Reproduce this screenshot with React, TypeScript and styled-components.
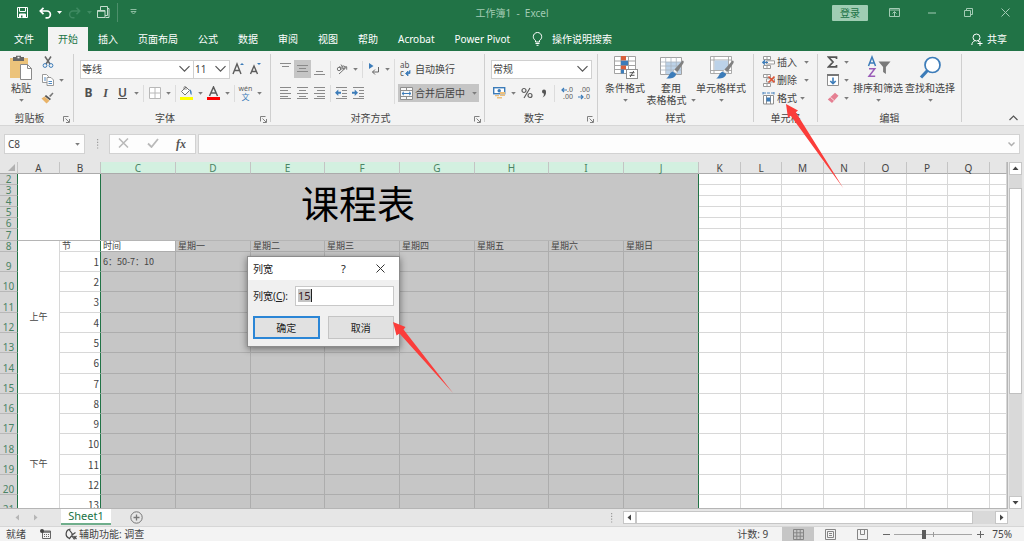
import React from "react";
import styled, { createGlobalStyle, css } from "styled-components";

const GREEN = "#217346";
const INK = "#444444";
const BLUE = "#3c7cb9";
const PANEL = "#f3f3f3";
const SHELL = "#e6e6e6";
const SELECTED = "#c6c6c6";

const GlobalStyle = createGlobalStyle`
  *, *::before, *::after { box-sizing: border-box; }
  body {
    margin: 0;
    color: ${INK};
    font: 10px/12px "Noto Sans", "Noto Sans CJK SC", sans-serif;
  }
  button, input, select {
    margin: 0;
    padding: 0;
    border: 0;
    border-radius: 0;
    background: none;
    color: inherit;
    font: inherit;
    outline: none;
  }
`;

const Window = styled.div`
  display: flex;
  flex-direction: column;
  height: 100vh;
  overflow: hidden;
  background: ${SHELL};
`;

/* ---------- Title bar and tabs ---------- */

const TitleBar = styled.header`
  display: grid;
  grid-template-columns: 1fr auto 1fr;
  align-items: center;
  height: 27px;
  padding-bottom: 2px;
  background: ${GREEN};
  color: #a3cbb4;
`;

const QuickAccess = styled.div`
  display: flex;
  align-items: center;
  padding-left: 13px;
`;

const QuickButton = styled.button<{ $w?: number; $gap?: number }>`
  display: flex;
  align-items: center;
  justify-content: center;
  width: ${(p) => p.$w ?? 18}px;
  height: 18px;
  margin-left: ${(p) => p.$gap ?? 0}px;
  color: #ffffff;
`;

const QuickRule = styled.span`
  width: 1px;
  height: 19px;
  margin: 0 6px 0 5px;
  background: #4d8f6b;
`;

const DocTitle = styled.h1`
  margin: 0;
  font-size: 10px;
  font-weight: 400;
  white-space: pre;
`;

const WindowControls = styled.div`
  display: flex;
  justify-content: flex-end;
  align-items: center;
`;

const SignIn = styled.button`
  width: 36px;
  height: 16px;
  margin-right: 8px;
  border-radius: 1px;
  background: #9fcdb3;
  color: ${GREEN};
`;

const WindowButton = styled.button`
  display: flex;
  align-items: center;
  justify-content: center;
  width: 37px;
  height: 24px;
`;

const TabBar = styled.nav`
  display: flex;
  align-items: stretch;
  height: 24px;
  background: ${GREEN};
  color: #ffffff;
`;

const Tab = styled.button<{ $active?: boolean; $file?: boolean }>`
  padding: 0 ${(p) => (p.$file ? 14 : 10)}px;
  white-space: nowrap;
  ${(p) => p.$active && css`
    background: ${PANEL};
    color: ${GREEN};
  `}
`;

const TabAction = styled.button<{ $end?: boolean }>`
  display: flex;
  align-items: center;
  gap: ${(p) => (p.$end ? 4 : 9)}px;
  margin-left: ${(p) => (p.$end ? "auto" : "2px")};
  padding: 0 ${(p) => (p.$end ? 17 : 10)}px 0 10px;
  white-space: nowrap;
`;

/* ---------- Ribbon ---------- */

const Ribbon = styled.section`
  display: flex;
  flex: none;
  height: 75px;
  background: ${PANEL};
  border-bottom: 1px solid #d6d6d6;
`;

const Group = styled.div<{ $w: number }>`
  display: flex;
  flex: none;
  flex-direction: column;
  width: ${(p) => p.$w}px;
`;

const GroupBody = styled.div<{ $indent: number }>`
  display: flex;
  height: 60px;
  padding-left: ${(p) => p.$indent}px;
`;

const GroupFooter = styled.div<{ $launcher?: boolean }>`
  display: grid;
  grid-template-columns: ${(p) => (p.$launcher ? "1fr 14px" : "1fr")};
  align-items: center;
  height: 14px;
  text-align: center;
  white-space: nowrap;
`;

const Launcher = styled.button`
  display: flex;
  padding: 2px 0 0 4px;
`;

const GroupRule = styled.div`
  width: 1px;
  height: 68px;
  margin-top: 3px;
  background: #cfcfcf;
`;

const RibbonEnd = styled.div`
  display: flex;
  flex: 1;
  align-items: flex-end;
  justify-content: flex-end;
  padding: 0 6px 2px 0;
`;

const Rows = styled.div`
  display: flex;
  flex-direction: column;
  gap: 6px;
  padding-top: 9px;
`;

const Stack = styled.div`
  display: flex;
  flex-direction: column;
  padding-top: 2px;
`;

const Row = styled.div`
  display: flex;
  align-items: center;
  height: 18px;
`;

const ToolButton = styled.button<{ $active?: boolean }>`
  display: flex;
  align-items: center;
  justify-content: center;
  width: 17px;
  height: 18px;
  background: ${(p) => (p.$active ? "#c5c5c5" : "transparent")};
`;

const CaretButton = styled.button`
  display: flex;
  align-items: center;
  justify-content: center;
  width: 10px;
  height: 18px;
`;

const RowRule = styled.span<{ $tall?: boolean }>`
  width: 1px;
  height: ${(p) => (p.$tall ? 45 : 17)}px;
  margin: ${(p) => (p.$tall ? "8px 3px 0 2px" : "0 2px")};
  background: #dcdcdc;
`;

const Letter = styled.span<{ $kind?: "bold" | "italic" | "underline" }>`
  color: #505050;
  font-size: 12px;
  font-weight: ${(p) => (p.$kind === "bold" ? 700 : 600)};
  font-family: ${(p) => (p.$kind === "italic" ? '"Liberation Serif", serif' : "inherit")};
  font-style: ${(p) => (p.$kind === "italic" ? "italic" : "normal")};
  text-decoration: ${(p) => (p.$kind === "underline" ? "underline" : "none")};
`;

const SelectFrame = styled.span<{ $w: number }>`
  display: grid;
  align-items: center;
  width: ${(p) => p.$w}px;
  height: 19px;
  border: 1px solid #d0d0d0;
  background: #ffffff;
  & > * { grid-area: 1 / 1; }
  & > svg { justify-self: end; margin-right: 2px; pointer-events: none; }
  & + & { border-left: 0; }
`;

const Select = styled.select`
  width: 100%;
  height: 17px;
  padding-left: 1px;
  appearance: none;
`;

const TextButton = styled.button<{ $active?: boolean; $gap?: number }>`
  position: relative;
  display: flex;
  align-items: center;
  gap: ${(p) => p.$gap ?? 2}px;
  height: 18px;
  padding: 0 2px;
  background: ${(p) => (p.$active ? "#c5c5c5" : "transparent")};
  white-space: nowrap;
`;

const MenuMark = styled.span<{ $gap: number }>`
  display: flex;
  margin-left: ${(p) => p.$gap}px;
`;

const BigButton = styled.button<{ $w: number }>`
  display: flex;
  flex-direction: column;
  align-items: center;
  width: ${(p) => p.$w}px;
  padding-top: 4px;
  white-space: nowrap;
`;

const BigLabel = styled.span`
  display: flex;
  align-items: center;
  justify-content: center;
  gap: 4px;
  height: 12px;
  &:first-of-type { margin-top: 2px; }
`;

/* ---------- Formula bar ---------- */

const FormulaBar = styled.section`
  display: flex;
  flex: none;
  align-items: center;
  height: 36px;
  padding: 0 4px;
`;

const FieldFrame = styled.div<{ $w?: number }>`
  display: flex;
  align-items: center;
  flex: ${(p) => (p.$w ? "none" : "1")};
  width: ${(p) => (p.$w ? p.$w + "px" : "auto")};
  height: 20px;
  padding: 0 4px 0 3px;
  border: 1px solid #d2d2d2;
  background: #fdfdfd;
`;

const FieldInput = styled.input`
  flex: 1;
  min-width: 0;
  height: 18px;
`;

const Grip = styled.span`
  display: flex;
  justify-content: center;
  width: 24px;
`;

const FormulaTools = styled.div`
  display: flex;
  justify-content: space-between;
  align-items: center;
  width: 87px;
  height: 20px;
  margin-right: 2px;
  padding: 0 9px 0 8px;
  border: 1px solid #d2d2d2;
  background: #fdfdfd;
`;

const FxLabel = styled.span`
  color: #555555;
  font: italic 700 12px/14px "Liberation Serif", serif;
`;

/* ---------- Worksheet ---------- */

const Workbook = styled.main`
  position: relative;
  display: flex;
  flex: 1;
  min-height: 0;
`;

const GridArea = styled.div`
  flex: 1;
  min-width: 0;
  overflow: hidden;
  border-right: 1px solid #b5b5b5;
  border-bottom: 1px solid #b5b5b5;
  background: #ffffff;
`;

const Sheet = styled.table`
  width: 100%;
  border-spacing: 0;
  table-layout: fixed;
  font: 10px/10px "Noto Sans", "Noto Sans CJK SC", sans-serif;
`;

const ColHead = styled.th<{ $selected?: boolean }>`
  height: 12px;
  padding: 0;
  border-right: 1px solid #c4c4c4;
  border-bottom: 1px solid #ababab;
  background: ${(p) => (p.$selected ? "#d3f0e0" : SHELL)};
  color: ${(p) => (p.$selected ? "#4b8465" : INK)};
  font-weight: 400;
`;

const Corner = styled(ColHead)`
  & > svg { display: block; margin-left: auto; }
`;

const RowHead = styled.th`
  padding: 0;
  border-right: 1px solid ${GREEN};
  border-bottom: 1px solid #b8b8b8;
  background: #d5d5d5;
  color: #4b8465;
  font-weight: 400;
  vertical-align: bottom;
`;

const Line = styled.tr<{ $h: number }>`
  height: ${(p) => p.$h}px;
`;

const Cell = styled.td<{ $kind?: "picked" | "active" | "number"; $edge?: boolean }>`
  padding: 0 1px 0 2px;
  border-right: 1px solid #d8d8d8;
  border-bottom: 1px solid #d8d8d8;
  font-size: 9px;
  font-family: "Noto Sans CJK SC", sans-serif;
  white-space: nowrap;
  ${(p) => p.$kind === "picked" && css`
    border-color: #adadad;
    background: ${SELECTED};
  `}
  ${(p) => p.$kind === "active" && css`
    border-color: #adadad;
    background: #ffffff;
  `}
  ${(p) => p.$kind === "number" && css`
    font-size: 10px;
    text-align: right;
  `}
  ${(p) => p.$edge && css`
    border-right-color: ${GREEN};
  `}
`;

const TitleCell = styled.td`
  padding: 0;
  border-right: 1px solid ${GREEN};
  border-bottom: 1px solid #b5b5b5;
  background: linear-gradient(to right, #ffffff 82px, ${GREEN} 82px, ${GREEN} 83px, ${SELECTED} 83px);
  color: #000000;
  font: 38px/56px "Noto Sans CJK SC", sans-serif;
  text-align: center;
  vertical-align: top;
`;

const PeriodCell = styled.td`
  padding: 0;
  border-right: 1px solid #d8d8d8;
  border-bottom: 1px solid #d8d8d8;
  font-size: 9px;
  text-align: center;
`;

const VScroll = styled.div`
  display: flex;
  flex: none;
  flex-direction: column;
  width: 16px;
  padding: 0 2px 0 1px;
`;

const ScrollButton = styled.button`
  display: flex;
  flex: none;
  align-items: center;
  justify-content: center;
  width: 13px;
  height: 13px;
  border: 1px solid #c6c6c6;
  background: #ffffff;
`;

const VTrack = styled.div`
  flex: 1;
  padding-top: 13px;
  background: #d9d9d9;
`;

const VThumb = styled.div`
  height: 67%;
  border: 1px solid #c0c0c0;
  background: #ffffff;
`;

/* ---------- Dialog ---------- */

const Dialog = styled.section`
  position: absolute;
  top: 94px;
  left: 247px;
  width: 153px;
  border: 1px solid #8c8c8c;
  background: #f0f0f0;
  box-shadow: 0 2px 7px rgba(0, 0, 0, 0.45);
  color: #222222;
`;

const DialogHead = styled.header`
  display: flex;
  align-items: center;
  height: 23px;
  padding-left: 5px;
  background: #ffffff;
`;

const DialogTitle = styled.h2`
  flex: 1;
  margin: 0;
  font-size: 10px;
  font-weight: 400;
`;

const DialogControl = styled.button`
  display: flex;
  align-items: center;
  justify-content: center;
  width: 37px;
  height: 23px;
  font-size: 11px;
`;

const DialogBody = styled.div`
  padding: 6px 5px 7px;
`;

const WidthField = styled.div`
  display: flex;
  align-items: center;
  justify-content: space-between;
`;

const WidthInput = styled.input`
  width: 99px;
  height: 20px;
  padding: 0 0 2px 2px;
  border: 1px solid #c8c8c8;
  background:
    linear-gradient(#222222, #222222) 15px 2px / 1px 13px no-repeat,
    linear-gradient(#c4c4c4, #c4c4c4) 2px 2px / 13px 13px no-repeat,
    #ffffff;
  color: #3a1c24;
  font-size: 11px;
`;

const DialogActions = styled.div`
  display: grid;
  grid-template-columns: 1fr 1fr;
  gap: 8px;
  margin-top: 10px;
`;

const DialogButton = styled.button<{ $primary?: boolean }>`
  position: relative;
  height: 23px;
  border: ${(p) => (p.$primary ? "2px solid #2b86d6" : "1px solid #c4c4c4")};
  background: #e1e1e1;
`;

const Pointer = styled.svg<{ $x: number; $y: number }>`
  position: absolute;
  z-index: 5;
  left: ${(p) => p.$x}px;
  top: ${(p) => p.$y}px;
  overflow: visible;
  pointer-events: none;
`;

/* ---------- Bottom bars ---------- */

const SheetBar = styled.footer`
  display: flex;
  flex: none;
  align-items: center;
  height: 17px;
  padding-right: 16px;
`;

const SheetNav = styled.button`
  display: flex;
  justify-content: center;
  width: 18px;
  margin-left: 8px;
  color: #b5b5b5;
  & + & { margin-left: 0; }
`;

const SheetTab = styled.button`
  width: 50px;
  height: 16px;
  margin: 0 19px 1px 17px;
  border-bottom: 2px solid #6fae8c;
  background: #ffffff;
  color: ${GREEN};
  font-size: 11px;
  line-height: 12px;
`;

const AddSheet = styled.button`
  display: flex;
`;

const SheetBarEnd = styled.div`
  display: flex;
  align-items: center;
  margin-left: auto;
`;

const HScroll = styled.div`
  display: flex;
  align-items: center;
  width: 385px;
  height: 13px;
`;

const HTrack = styled.div`
  flex: 1;
  height: 13px;
  background: #d9d9d9;
`;

const HThumb = styled.div`
  width: 94%;
  height: 13px;
  border: 1px solid #c6c6c6;
  background: #ffffff;
`;

const StatusBar = styled.footer`
  display: flex;
  flex: none;
  align-items: center;
  justify-content: space-between;
  height: 15px;
  padding: 0 12px 0 6px;
  border-top: 1px solid #d6d6d6;
  background: ${PANEL};
  white-space: nowrap;
`;

const StatusSide = styled.div`
  display: flex;
  align-items: center;
`;

const StatusItem = styled.span`
  display: flex;
  align-items: center;
  gap: 2px;
  margin-right: 14px;
`;

const ViewButton = styled.button<{ $active?: boolean }>`
  display: flex;
  align-items: center;
  justify-content: center;
  width: 32px;
  height: 14px;
  background: ${(p) => (p.$active ? "#c6c6c6" : "transparent")};
`;

const ZoomStep = styled.button`
  display: flex;
  align-items: center;
  justify-content: center;
  width: 16px;
  height: 14px;
`;

const ZoomRange = styled.input`
  width: 78px;
  height: 12px;
  appearance: none;
  background:
    linear-gradient(#9a9a9a, #9a9a9a) 39px 4px / 1px 5px no-repeat,
    linear-gradient(#a5a5a5, #a5a5a5) 0 6px / 78px 1px no-repeat;
  &::-webkit-slider-thumb {
    appearance: none;
    width: 4px;
    height: 9px;
    background: #5c5c5c;
  }
`;

const ZoomValue = styled.output`
  margin-left: 4px;
`;

/* ---------- Drawings ---------- */

const Caret = () => (
  <svg width="5" height="3" viewBox="0 0 5 3"><path d="M.2 0h4.600L2.500 2.700z" fill="#7c7c7c" /></svg>
);

const Chevron = () => (
  <svg width="13" height="8" viewBox="0 0 13 8" fill="none" stroke="#555" strokeWidth="1.2"><path d="M1.500 1.200l5 5 5-5" /></svg>
);

const Dots = () => (
  <svg width="3" height="10" viewBox="0 0 3 10"><path d="M1 0h1.200v1.200H1zM1 2.800h1.200V4H1zM1 5.600h1.200v1.200H1zM1 8.400h1.200v1.200H1z" fill="#9c9c9c" /></svg>
);

const LauncherIcon = () => (
  <svg width="7" height="7" viewBox="0 0 7 7" fill="none" stroke="#808080" strokeWidth="1"><path d="M.5 5.500v-5h5M2.500 2.500l3.500 3.500M6.500 3v3.500H3" /></svg>
);

const Lines = ({ rows }: { rows: number[][] }) => (
  <svg width="13" height="14" viewBox="0 0 13 14">
    {rows.map(([x, y, w]) => <rect key={y} x={x} y={y} width={w} height="1" fill="#8a8a8a" />)}
  </svg>
);

const ALIGN_TOP = [[1, 1, 11], [3, 4, 7]];
const ALIGN_MIDDLE = [[1, 3, 11], [3, 6, 7], [1, 9, 11]];
const ALIGN_BOTTOM = [[3, 9, 7], [1, 12, 11]];
const ALIGN_LEFT = [[1, 1, 11], [1, 4, 8], [1, 7, 11], [1, 10, 8], [1, 12, 11]];
const ALIGN_CENTER = [[1, 1, 11], [3, 4, 7], [1, 7, 11], [3, 10, 7], [1, 12, 11]];
const ALIGN_RIGHT = [[1, 1, 11], [4, 4, 8], [1, 7, 11], [4, 10, 8], [1, 12, 11]];

const IndentIcon = ({ flip }: { flip?: boolean }) => (
  <svg width="13" height="14" viewBox="0 0 13 14">
    <path d="M1 1h11v1H1zM7 4h5v1H7zM7 7h5v1H7zM7 10h5v1H7zM1 12h11v1H1z" fill="#8a8a8a" />
    <path d={flip ? "M6 6.700L2.700 3.500v2.300H0v1.900h2.700V10z" : "M0 6.700L3.300 3.500v2.300H6v1.900H3.300V10z"} fill={BLUE} />
  </svg>
);

const PasteIcon = () => (
  <svg width="22" height="25" viewBox="0 0 22 25">
    <rect x="0" y="3" width="18" height="20" fill="#ecc37b" />
    <path d="M3 2h3V.8h5V2h3v4H3z" fill="#666" />
    <rect x="7.500" y="1.800" width="2" height="1.500" fill="#f3f3f3" />
    <path d="M10.500 9.500h7l4 4v11h-11z" fill="#fff" stroke="#8a8a8a" />
    <path d="M17.500 9.500v4h4" fill="none" stroke="#8a8a8a" />
  </svg>
);

const CutIcon = () => (
  <svg width="12" height="12" viewBox="0 0 12 12" fill="none">
    <path d="M3 .5l5 7.500M9 .5L4 8" stroke="#666" strokeWidth="1.500" />
    <circle cx="3" cy="9.500" r="1.900" stroke={BLUE} />
    <circle cx="9" cy="9.500" r="1.900" stroke={BLUE} />
  </svg>
);

const CopyIcon = () => (
  <svg width="12" height="12" viewBox="0 0 12 12" fill="#fff" stroke="#8f8f8f" strokeWidth=".9">
    <path d="M.5.500h4l2 2v6h-6z" /><path d="M5 3.500h4l2.500 2.500v5.500H5z" />
    <path d="M2 4h2M2 6h2M6.500 7.500h3.500M6.500 9.500h3.500" stroke={BLUE} />
  </svg>
);

const BrushIcon = () => (
  <svg width="13" height="12" viewBox="0 0 13 12">
    <path d="M8 4l3.500-3.500 1 1L9.500 5z" fill="#777" />
    <path d="M5 3l5 4-1.300 1.300-5-4z" fill="#555" />
    <path d="M3.500 4.500L8.500 8.700 5.500 11.500.5 6.500z" fill="#e9b368" />
  </svg>
);

const GrowIcon = ({ small }: { small?: boolean }) => (
  <svg width="13" height="14" viewBox="0 0 13 14">
    <path d={small ? "M1.500 12L5 4l3.500 8M3 9.500h4" : "M1 12L5 2l4 10M2.500 8.500h5"} fill="none" stroke="#5c5c5c" strokeWidth="1.400" />
    <path d={small ? "M8 1h4l-2 2z" : "M8 3h4l-2-2z"} fill={BLUE} />
  </svg>
);

const BordersIcon = () => (
  <svg width="12" height="12" viewBox="0 0 12 12" fill="#fff" stroke="#b8b8b8"><path d="M.5.500h11v11H.5zM6 .5v11M.5 6h11" /></svg>
);

const FillIcon = () => (
  <svg width="13" height="14" viewBox="0 0 13 14">
    <path d="M6 1L1.500 5.500 5 9l4.500-4.500z" fill="#fff" stroke="#777" />
    <path d="M4 4V1.500a1 1 0 012 0V4" fill="none" stroke="#777" strokeWidth=".8" />
    <path d="M9.500 3c2 1 2.500 3 2 6-1-.5-1.500-2-1.500-4z" fill={BLUE} />
    <rect y="11" width="13" height="3" fill="#ffff00" />
  </svg>
);

const FontColorIcon = () => (
  <svg width="13" height="14" viewBox="0 0 13 14">
    <path d="M2.500 10L6.500 1l4 9M4 7h5" fill="none" stroke="#5c5c5c" strokeWidth="1.500" />
    <rect y="11" width="13" height="3" fill="#ff0000" />
  </svg>
);

const Phonetic = styled.span`
  display: flex;
  flex-direction: column;
  align-items: center;
  color: #5c5c5c;
  font-size: 7px;
  line-height: 8px;
  & > b { color: ${BLUE}; font-size: 8px; font-weight: 400; }
`;

const OrientationIcon = () => (
  <svg width="12" height="12" viewBox="0 0 12 12" fill="none" stroke="#777">
    <circle cx="3" cy="6" r="1.700" /><path d="M3.500 3l2 3.500M5 1.500l3 5" /><circle cx="7.300" cy="4.500" r="1.600" />
    <path d="M3 11l7.500-7M7.800 3.800h2.900v2.900" />
  </svg>
);

const DirectionIcon = () => (
  <svg width="12" height="12" viewBox="0 0 12 12">
    <path d="M1 0l4.500 3L1 6z" fill={BLUE} />
    <path d="M10.500 4v5H4.500M7 6.500L4.500 9 7 11.500" fill="none" stroke="#666" />
  </svg>
);

const WrapLetters = styled.span`
  display: grid;
  width: 11px;
  color: #505050;
  font-size: 8px;
  line-height: 8px;
  text-align: left;
  & > span { display: flex; align-items: center; gap: 1px; }
`;

const WrapArrow = () => (
  <svg width="6" height="6" viewBox="0 0 6 6"><path d="M5 0v3.500H2.500M3 1L.5 3.500 3 6z" fill={BLUE} stroke={BLUE} strokeWidth=".8" /></svg>
);

const MergeIcon = () => (
  <svg width="13" height="13" viewBox="0 0 13 13" fill="#f8f8f8" stroke="#8f8f8f">
    <path d="M.5.500h12v12H.5zM.5 3.500h12M.5 9.500h12M6.500 .5v3M6.500 9.500v3" />
    <path d="M2 6.500h9M4 4.800L2 6.500l2 1.700M9 4.800l2 1.700-2 1.700" fill="none" stroke={BLUE} />
  </svg>
);

const MoneyIcon = () => (
  <svg width="13" height="12" viewBox="0 0 13 12">
    <rect x=".7" y=".7" width="11" height="6" fill="#fff" stroke={BLUE} strokeWidth="1.400" />
    <circle cx="6.200" cy="3.700" r="1.700" fill={BLUE} />
    <path d="M7 5h5v2H7zM7 7.500h5v1.500H7zM2 8h4v1.300H2zM4 10h5v1.500H4z" fill="#ecbf7c" />
  </svg>
);

const Decimals = styled.span`
  display: grid;
  width: 15px;
  color: #5c5c5c;
  font-size: 7px;
  line-height: 7px;
  & > span { display: flex; align-items: center; justify-content: flex-end; }
`;

const TinyArrow = ({ right }: { right?: boolean }) => (
  <svg width="6" height="6" viewBox="0 0 6 6"><path d={right ? "M0 3h5M3 1l2 2-2 2" : "M6 3H1M3 1L1 3l2 2"} fill="none" stroke={BLUE} strokeWidth="1.200" /></svg>
);

const ConditionalIcon = () => (
  <svg width="25" height="25" viewBox="0 0 25 25">
    <path d="M1.500 1.500h21v17h-21zM8 1.500v17M15.500 1.500v17M1.500 6h21M1.500 10.500h21M1.500 14.500h21" fill="#fff" stroke="#a2a2a2" />
    <path d="M8 1h5v4.500H8zM8 10.500h5v4H8z" fill="#d9603b" /><path d="M8 5.700h7v4.500H8zM8 14.500h3v4H8z" fill={BLUE} />
    <rect x="13.500" y="14.500" width="11" height="9" fill="#fff" stroke="#8f8f8f" />
    <path d="M16.500 17.700h5M16.500 20.300h5M20.700 16l-3.500 6" stroke="#555" fill="none" />
  </svg>
);

const StyleBrush = () => (
  <g>
    <path d="M23.500 5.500c1 0 1.500.8 1 2.500l-6 9-3-2.500z" fill="#808080" />
    <path d="M15.300 14.600l3 2.500-1 1.400-3.300-2.300z" fill="#fff" stroke="#999" strokeWidth=".5" />
    <path d="M13.500 16.500l3.700 2.600c-.5 3.500-5 4.900-10 4.400 3-1.500 2.700-5.500 6.300-7z" fill={BLUE} />
  </g>
);

const TableStyleIcon = () => (
  <svg width="25" height="25" viewBox="0 0 25 25">
    <path d="M1.500 2.500h21v17h-21z" fill="#fff" stroke="#a2a2a2" />
    <path d="M7 7h15v12H7z" fill="#bcd2e8" />
    <path d="M6.700 2.500v17M12 2.500v17M17.300 2.500v17M1.500 7h21M1.500 11h21M1.500 15h21" fill="none" stroke="#a9b4bf" strokeWidth=".8" />
    <StyleBrush />
  </svg>
);

const CellStyleIcon = () => (
  <svg width="25" height="25" viewBox="0 0 25 25">
    <path d="M1.500 1.500h21v17h-21zM5 1.500v17M19.500 1.500v17M1.500 5h21M1.500 15.500h21" fill="#fff" stroke="#a2a2a2" strokeWidth=".9" />
    <rect x="5.500" y="5.500" width="13.500" height="9.500" fill="#bcd2e8" />
    <StyleBrush />
  </svg>
);

const CellsIcon = ({ kind }: { kind: "insert" | "delete" | "format" }) => (
  <svg width="13" height="13" viewBox="0 0 13 13" fill="none">
    {kind === "format" ? (
      <>
        <path d="M1.500 3.500h10v8.500h-10zM4.500 3.500v8.500M8.500 3.500v8.500" fill="#fff" stroke="#8f8f8f" />
        <rect x="4.500" y="5.500" width="4" height="4" fill={BLUE} />
        <path d="M1 1h3M5 1h3M9 1h3M1 0v2.500M12 0v2.500" stroke={BLUE} strokeWidth=".9" />
      </>
    ) : (
      <>
        <path d="M1.500.500h7v3h-7zM1.500 9.500h7v3h-7zM5 .5v3M5 9.500v3" fill="#fff" stroke="#9a9a9a" />
        <path d="M4.500 4.800h8v3.200h-8z" fill="#fff" stroke="#9a9a9a" />
        {kind === "insert"
          ? <path d="M6 6.400H.8M3 4.300L.8 6.400 3 8.500" stroke={BLUE} strokeWidth="1.400" />
          : <path d="M6.500 2.500l6 6M12.500 2.500l-6 6" stroke="#dc5334" strokeWidth="1.600" />}
      </>
    )}
  </svg>
);

const SigmaIcon = () => (
  <svg width="11" height="12" viewBox="0 0 11 12"><path d="M9.500 3V1.200H1.500L6 6l-4.500 4.800h8V9" fill="none" stroke="#555" strokeWidth="1.700" /></svg>
);

const FillDownIcon = () => (
  <svg width="12" height="12" viewBox="0 0 12 12"><path d="M.5.500h11v11H.5z" fill="#fff" stroke="#8f8f8f" /><path d="M0 0h12v2H0z" fill="#777" /><path d="M6 3.500V10M3.300 7L6 9.700 8.700 7" fill="none" stroke={BLUE} strokeWidth="1.600" /></svg>
);

const EraserIcon = () => (
  <svg width="12" height="12" viewBox="0 0 12 12"><path d="M8 .8l3.500 3L5 11 .8 7.500z" fill="#e57f92" /><path d="M3.300 5.200l3.900 3.400" stroke="#f8dbe0" strokeWidth="1" /></svg>
);

const SortIcon = () => (
  <svg width="25" height="25" viewBox="0 0 25 25" fill="none">
    <path d="M2.500 11L6 2l3.500 9M3.700 8h4.600" stroke={BLUE} strokeWidth="1.500" />
    <path d="M3 13.700h5.800L3 21.300h6.200" stroke="#9a5cb8" strokeWidth="1.500" />
    <path d="M12.500 6.500h12l-4.600 5.500v7l-2.800-2v-5z" fill="#7a7a7a" />
  </svg>
);

const SearchIcon = () => (
  <svg width="25" height="25" viewBox="0 0 25 25" fill="none">
    <path d="M9.500 15.500L3 22.500" stroke={BLUE} strokeWidth="3.200" />
    <circle cx="14.500" cy="10" r="7.500" fill="#fff" stroke={BLUE} strokeWidth="1.700" />
  </svg>
);

const AccessibilityIcon = () => (
  <svg width="12" height="12" viewBox="0 0 12 12" fill="none" stroke="#4a4a4a" strokeWidth="1.200">
    <path d="M5.500 1.200A4.700 4.700 0 004 10.200M4 1.500l3 4v2.500l2.500 3.500M10.500 4.500L7 7M6.500 8l-2.500 3M8.500 8l3 3M11.500 8l-3 3" />
  </svg>
);

const RecordIcon = () => (
  <svg width="11" height="10" viewBox="0 0 11 10" fill="none" stroke="#666"><path d="M2.500 2h8v7.500h-8z" /><path d="M3 3h8" strokeWidth="1.500" /><path d="M4 5.500h5M4 7.500h5" strokeDasharray="1 1" /><circle cx="2" cy="2" r="2" fill="#444" stroke="none" /></svg>
);

const ViewIcon = ({ kind }: { kind: "grid" | "page" | "break" }) => (
  <svg width="11" height="11" viewBox="0 0 11 11" fill="none" stroke="#858585">
    <path d="M.5.500h10v10H.5z" />
    {kind === "grid" && <path d="M3.800 .5v10M7.200 .5v10M.5 3.800h10M.5 7.200h10" />}
    {kind === "page" && <path d="M2.500 2.500h6v6h-6zM4 4.500h3M4 6.500h3" />}
    {kind === "break" && <path d="M3.500 .5v5h4v-5" />}
  </svg>
);

const Arrowhead = ({ dir }: { dir: "up" | "down" | "left" | "right" }) => {
  const paths = { up: "M.5 5l3-3.500 3 3.500z", down: "M.5 2l3 3.500L6.500 2z", left: "M5 .5L1.500 3.500 5 6.500z", right: "M2 .5l3.500 3L2 6.500z" };
  return <svg width="7" height="7" viewBox="0 0 7 7"><path d={paths[dir]} fill="currentColor" /></svg>;
};

/* ---------- Data ---------- */

const TABS = ["插入", "页面布局", "公式", "数据", "审阅", "视图", "帮助", "Acrobat", "Power Pivot"];
const COLUMNS: [string, number][] = [
  ["A", 42], ["B", 41], ["C", 75], ["D", 75], ["E", 74], ["F", 75], ["G", 75], ["H", 74], ["I", 75], ["J", 75],
  ["K", 42], ["L", 41], ["M", 42], ["N", 41], ["O", 42], ["P", 41], ["Q", 42],
];
const SELECTED_COLUMNS = ["D", "E", "F", "G", "H", "I", "J"];
const FREE_COLUMNS = ["K", "L", "M", "N", "O", "P", "Q", "rest"];
const DAYS = ["星期一", "星期二", "星期三", "星期四", "星期五", "星期六", "星期日"];
const TITLE_ROWS: [number, number][] = [[2, 11], [3, 11], [4, 11], [5, 11], [6, 11], [7, 12]];
const LESSON_ROWS: [number, number][] = [
  [9, 20], [10, 20], [11, 21], [12, 20], [13, 20], [14, 21], [15, 20],
  [16, 20], [17, 20], [18, 21], [19, 20], [20, 20], [21, 20],
];

const FreeCells = () => <>{FREE_COLUMNS.map((c) => <Cell key={c} />)}</>;

const Footer = ({ label, launcher }: { label: string; launcher?: boolean }) => (
  <GroupFooter $launcher={launcher}>
    <span>{label}</span>
    {launcher && <Launcher aria-label={label + "设置"}><LauncherIcon /></Launcher>}
  </GroupFooter>
);

const CaretTool = ({ label }: { label: string }) => <CaretButton aria-label={label}><Caret /></CaretButton>;

const Worksheet = () => (
  <GridArea>
    <Sheet>
      <colgroup>
        <col style={{ width: 18 }} />
        {COLUMNS.map(([name, width]) => <col key={name} style={{ width }} />)}
        <col />
      </colgroup>
      <thead>
        <tr>
          <Corner aria-label="全选"><svg width="10" height="9" viewBox="0 0 10 9"><path d="M8 1v7H1z" fill="#b0b0b0" /></svg></Corner>
          {COLUMNS.map(([name]) => <ColHead key={name} $selected={name === "C" || SELECTED_COLUMNS.includes(name)}>{name}</ColHead>)}
          <ColHead />
        </tr>
      </thead>
      <tbody>
        {TITLE_ROWS.map(([n, h], i) => (
          <Line key={n} $h={h}>
            <RowHead>{n}</RowHead>
            {i === 0 && <TitleCell colSpan={10} rowSpan={6}>课程表</TitleCell>}
            <FreeCells />
          </Line>
        ))}
        <Line $h={11}>
          <RowHead>8</RowHead>
          <PeriodCell rowSpan={8}>上午</PeriodCell>
          <Cell $edge>节</Cell>
          <Cell $kind="active">时间</Cell>
          {DAYS.map((d, i) => <Cell key={d} $kind="picked" $edge={i === 6}>{d}</Cell>)}
          <FreeCells />
        </Line>
        {LESSON_ROWS.map(([n, h]) => (
          <Line key={n} $h={h}>
            <RowHead>{n}</RowHead>
            {n === 16 && <PeriodCell rowSpan={7}>下午</PeriodCell>}
            <Cell $kind="number" $edge>{n - 8}</Cell>
            <Cell $kind="picked">{n === 9 ? "6：50-7：10" : ""}</Cell>
            {SELECTED_COLUMNS.map((c) => <Cell key={c} $kind="picked" $edge={c === "J"} />)}
            <FreeCells />
          </Line>
        ))}
        <Line $h={20}>
          <RowHead />
          <Cell $edge />
          <Cell $kind="picked" />
          {SELECTED_COLUMNS.map((c) => <Cell key={c} $kind="picked" $edge={c === "J"} />)}
          <FreeCells />
        </Line>
      </tbody>
    </Sheet>
  </GridArea>
);

export default function App() {
  return (
    <Window>
      <GlobalStyle />
      <TitleBar>
        <QuickAccess>
          <QuickButton aria-label="保存">
            <svg width="11" height="11" viewBox="0 0 11 11" fill="none" stroke="currentColor"><path d="M.5.500h10v10H.5z" /><path d="M2.500 1v3.500h6V1" /><path d="M2.500 7h6v3.500h-6z" fill="currentColor" /><path d="M4 8.500h1.500v2H4z" fill={GREEN} stroke="none" /></svg>
          </QuickButton>
          <QuickButton $gap={5} aria-label="撤消">
            <svg width="13" height="12" viewBox="0 0 13 12" fill="none" stroke="currentColor" strokeWidth="1.700"><path d="M4.500 .8L1.300 4l3.200 3.200M1.500 4H8a3.300 3.300 0 010 6.800H6.500" /></svg>
          </QuickButton>
          <CaretButton aria-label="撤消列表"><svg width="5" height="3"><path d="M0 0h5L2.500 3z" fill="#fff" /></svg></CaretButton>
          <QuickButton $w={20} aria-label="恢复">
            <svg width="13" height="12" viewBox="0 0 13 12" fill="none" stroke="#3f8a62" strokeWidth="1.500"><path d="M8.500 .8L11.700 4 8.500 7.200M11.500 4H5a3.300 3.300 0 000 6.800h1.500" /></svg>
          </QuickButton>
          <CaretButton aria-label="恢复列表"><svg width="5" height="3"><path d="M0 0h5L2.500 3z" fill="#3f8a62" /></svg></CaretButton>
          <QuickButton aria-label="切换窗口">
            <svg width="13" height="13" viewBox="0 0 13 13" fill={GREEN} stroke="#c4dccd"><path d="M3.500.500h7v9h-7z" /><path d="M.5 4.500h7.500v7H.5z" /><path d="M.5 5h7.500" strokeWidth="1.500" /><path d="M10.500 2.500h1.500v9H8.500" fill="none" /></svg>
          </QuickButton>
          <QuickRule />
          <QuickButton aria-label="自定义快速访问工具栏">
            <svg width="7" height="7" viewBox="0 0 7 7" fill="none" stroke="#8dbda1"><path d="M.5.500h6M1 2.500h5L3.500 5z" /></svg>
          </QuickButton>
        </QuickAccess>
        <DocTitle>工作簿1  -  Excel</DocTitle>
        <WindowControls>
          <SignIn>登录</SignIn>
          <WindowButton aria-label="功能区显示选项"><svg width="11" height="9" viewBox="0 0 11 9" fill="none" stroke="currentColor"><path d="M.5.500h10v8H.5zM.5 2h10M5.500 8V4M3.500 5.500l2-2 2 2" /></svg></WindowButton>
          <WindowButton aria-label="最小化"><svg width="8" height="2"><path d="M0 1h8" stroke="currentColor" /></svg></WindowButton>
          <WindowButton aria-label="还原"><svg width="9" height="9" viewBox="0 0 9 9" fill="none" stroke="currentColor"><path d="M.5 2.500h6v6h-6zM2.500 2V.500h6v6H7" /></svg></WindowButton>
          <WindowButton aria-label="关闭"><svg width="9" height="9" viewBox="0 0 9 9" stroke="currentColor"><path d="M.5.500l8 8M8.500.500l-8 8" /></svg></WindowButton>
        </WindowControls>
      </TitleBar>

      <TabBar>
        <Tab $file>文件</Tab>
        <Tab $active>开始</Tab>
        {TABS.map((t) => <Tab key={t}>{t}</Tab>)}
        <TabAction>
          <svg width="11" height="14" viewBox="0 0 11 14" fill="none" stroke="currentColor"><path d="M3.500 10V8.500C2 7.500 1.300 6.200 1.300 4.700a4.200 4.200 0 018.400 0c0 1.500-.7 2.800-2.200 3.800V10zM3.500 11.500h4M4.500 13.300h2" /></svg>
          操作说明搜索
        </TabAction>
        <TabAction $end>
          <svg width="12" height="13" viewBox="0 0 12 13" fill="none" stroke="currentColor"><circle cx="5.500" cy="4.500" r="3.500" /><path d="M.8 12c.3-2.500 1.300-3.600 3-4.200M7 8l1.500 1M9 8v5M6.500 10.500h5" /></svg>
          共享
        </TabAction>
      </TabBar>

      <Ribbon>
        <Group $w={73}>
          <GroupBody $indent={3}>
            <BigButton $w={36}>
              <PasteIcon />
              <BigLabel>粘贴</BigLabel>
              <BigLabel><Caret /></BigLabel>
            </BigButton>
            <Stack>
              <Row><ToolButton aria-label="剪切"><CutIcon /></ToolButton></Row>
              <Row><ToolButton aria-label="复制"><CopyIcon /></ToolButton><CaretTool label="复制选项" /></Row>
              <Row><ToolButton aria-label="格式刷"><BrushIcon /></ToolButton></Row>
            </Stack>
          </GroupBody>
          <Footer label="剪贴板" launcher />
        </Group>
        <GroupRule />

        <Group $w={196}>
          <GroupBody $indent={6}>
            <Rows>
              <Row>
                <SelectFrame $w={114}><Select aria-label="字体" defaultValue="等线"><option>等线</option></Select><Chevron /></SelectFrame>
                <SelectFrame $w={36}><Select aria-label="字号" defaultValue="11"><option>11</option></Select><Chevron /></SelectFrame>
                <ToolButton aria-label="增大字号"><GrowIcon /></ToolButton>
                <ToolButton aria-label="减小字号"><GrowIcon small /></ToolButton>
              </Row>
              <Row>
                <ToolButton aria-label="加粗"><Letter $kind="bold">B</Letter></ToolButton>
                <ToolButton aria-label="倾斜"><Letter $kind="italic">I</Letter></ToolButton>
                <ToolButton aria-label="下划线"><Letter $kind="underline">U</Letter></ToolButton>
                <CaretTool label="下划线样式" />
                <RowRule />
                <ToolButton aria-label="边框"><BordersIcon /></ToolButton>
                <CaretTool label="边框样式" />
                <RowRule />
                <ToolButton aria-label="填充颜色"><FillIcon /></ToolButton>
                <CaretTool label="填充颜色列表" />
                <ToolButton aria-label="字体颜色"><FontColorIcon /></ToolButton>
                <CaretTool label="字体颜色列表" />
                <RowRule />
                <ToolButton aria-label="拼音"><Phonetic>wén<b>文</b></Phonetic></ToolButton>
                <CaretTool label="拼音选项" />
              </Row>
            </Rows>
          </GroupBody>
          <Footer label="字体" launcher />
        </Group>
        <GroupRule />

        <Group $w={213}>
          <GroupBody $indent={6}>
            <Rows>
              <Row>
                <ToolButton aria-label="顶端对齐"><Lines rows={ALIGN_TOP} /></ToolButton>
                <ToolButton $active aria-label="垂直居中"><Lines rows={ALIGN_MIDDLE} /></ToolButton>
                <ToolButton aria-label="底端对齐"><Lines rows={ALIGN_BOTTOM} /></ToolButton>
                <RowRule />
                <ToolButton aria-label="方向"><OrientationIcon /></ToolButton>
                <CaretTool label="方向选项" />
                <RowRule />
                <ToolButton aria-label="文字方向"><DirectionIcon /></ToolButton>
                <CaretTool label="文字方向选项" />
              </Row>
              <Row>
                <ToolButton aria-label="左对齐"><Lines rows={ALIGN_LEFT} /></ToolButton>
                <ToolButton aria-label="居中"><Lines rows={ALIGN_CENTER} /></ToolButton>
                <ToolButton aria-label="右对齐"><Lines rows={ALIGN_RIGHT} /></ToolButton>
                <RowRule />
                <ToolButton aria-label="减少缩进量"><IndentIcon /></ToolButton>
                <ToolButton aria-label="增加缩进量"><IndentIcon flip /></ToolButton>
              </Row>
            </Rows>
            <RowRule $tall />
            <Rows>
              <TextButton $gap={4}>
                <WrapLetters><span>ab</span><span>c<WrapArrow /></span></WrapLetters>
                自动换行
              </TextButton>
              <TextButton $active>
                <MergeIcon />合并后居中<MenuMark $gap={5}><Caret /></MenuMark>
              </TextButton>
            </Rows>
          </GroupBody>
          <Footer label="对齐方式" launcher />
        </Group>
        <GroupRule />

        <Group $w={112}>
          <GroupBody $indent={6}>
            <Rows>
              <Row><SelectFrame $w={101}><Select aria-label="数字格式" defaultValue="常规"><option>常规</option></Select><Chevron /></SelectFrame></Row>
              <Row>
                <ToolButton aria-label="会计数字格式"><MoneyIcon /></ToolButton>
                <CaretTool label="会计格式选项" />
                <ToolButton aria-label="百分比样式"><svg width="12" height="12" viewBox="0 0 12 12" fill="none" stroke="#5c5c5c" strokeWidth="1.200"><circle cx="3" cy="3.500" r="2" /><circle cx="9" cy="8.500" r="2" /><path d="M9 1L3 11" /></svg></ToolButton>
                <ToolButton aria-label="千位分隔样式"><svg width="6" height="9" viewBox="0 0 6 9"><path d="M1 2.500a2 2 0 014 0C5.300 5.500 4 7.500 1.500 8.500 2.800 7 3 6 2.800 4.500A2 2 0 011 2.500z" fill="#555" /></svg></ToolButton>
                <RowRule />
                <ToolButton aria-label="增加小数位数"><Decimals><span><TinyArrow />.0</span><span>.00</span></Decimals></ToolButton>
                <ToolButton aria-label="减少小数位数"><Decimals><span>.00</span><span><TinyArrow right />.0</span></Decimals></ToolButton>
              </Row>
            </Rows>
          </GroupBody>
          <Footer label="数字" launcher />
        </Group>
        <GroupRule />

        <Group $w={155}>
          <GroupBody $indent={6}>
            <BigButton $w={42}><ConditionalIcon /><BigLabel>条件格式</BigLabel><BigLabel><Caret /></BigLabel></BigButton>
            <BigButton $w={50}><TableStyleIcon /><BigLabel>套用</BigLabel><BigLabel>表格格式 <Caret /></BigLabel></BigButton>
            <BigButton $w={50}><CellStyleIcon /><BigLabel>单元格样式</BigLabel><BigLabel><Caret /></BigLabel></BigButton>
          </GroupBody>
          <Footer label="样式" />
        </Group>
        <GroupRule />

        <Group $w={63}>
          <GroupBody $indent={6}>
            <Stack>
              <TextButton><CellsIcon kind="insert" />插入<MenuMark $gap={5}><Caret /></MenuMark></TextButton>
              <TextButton><CellsIcon kind="delete" />删除<MenuMark $gap={5}><Caret /></MenuMark></TextButton>
              <TextButton>
                <CellsIcon kind="format" />格式<MenuMark $gap={1}><Caret /></MenuMark>
                <Pointer $x={26} $y={15} width="58" height="84" viewBox="0 0 58 84" aria-hidden="true">
                  <path d="M0 0L12 6.500 9.800 8.300 57.500 84.500 4.800 11.800 2 14z" fill="#fb3d3a" />
                </Pointer>
              </TextButton>
            </Stack>
          </GroupBody>
          <Footer label="单元格" />
        </Group>
        <GroupRule />

        <Group $w={143}>
          <GroupBody $indent={6}>
            <Stack>
              <Row><ToolButton aria-label="自动求和"><SigmaIcon /></ToolButton><CaretTool label="求和选项" /></Row>
              <Row><ToolButton aria-label="填充"><FillDownIcon /></ToolButton><CaretTool label="填充选项" /></Row>
              <Row><ToolButton aria-label="清除"><EraserIcon /></ToolButton><CaretTool label="清除选项" /></Row>
            </Stack>
            <BigButton $w={54}><SortIcon /><BigLabel>排序和筛选</BigLabel><BigLabel><Caret /></BigLabel></BigButton>
            <BigButton $w={50}><SearchIcon /><BigLabel>查找和选择</BigLabel><BigLabel><Caret /></BigLabel></BigButton>
          </GroupBody>
          <Footer label="编辑" />
        </Group>
        <GroupRule />
        <RibbonEnd>
          <button aria-label="折叠功能区"><svg width="9" height="6" viewBox="0 0 9 6" fill="none" stroke="#555" strokeWidth="1.200"><path d="M.5 5l4-4 4 4" /></svg></button>
        </RibbonEnd>
      </Ribbon>

      <FormulaBar>
        <FieldFrame $w={81}>
          <FieldInput aria-label="名称框" defaultValue="C8" />
          <Caret />
        </FieldFrame>
        <Grip><Dots /></Grip>
        <FormulaTools>
          <button aria-label="取消输入"><svg width="11" height="10" viewBox="0 0 11 10" stroke="#b9b9b9" strokeWidth="1.500"><path d="M1 .5l9 9M10 .5l-9 9" /></svg></button>
          <button aria-label="确认输入"><svg width="12" height="10" viewBox="0 0 12 10" fill="none" stroke="#b9b9b9" strokeWidth="1.800"><path d="M1 5.500L4.500 9 11 1" /></svg></button>
          <button aria-label="插入函数"><FxLabel>fx</FxLabel></button>
        </FormulaTools>
        <FieldFrame>
          <FieldInput aria-label="编辑栏" />
          <svg width="7" height="5" viewBox="0 0 7 5" fill="none" stroke="#b0b0b0" strokeWidth="1.500"><path d="M.5.500l3 3 3-3" /></svg>
        </FieldFrame>
      </FormulaBar>

      <Workbook>
        <Worksheet />
        <VScroll>
          <ScrollButton aria-label="向上滚动"><Arrowhead dir="up" /></ScrollButton>
          <VTrack><VThumb /></VTrack>
          <ScrollButton aria-label="向下滚动"><Arrowhead dir="down" /></ScrollButton>
        </VScroll>
        <Dialog role="dialog" aria-labelledby="width-dialog-title">
          <DialogHead>
            <DialogTitle id="width-dialog-title">列宽</DialogTitle>
            <DialogControl aria-label="帮助">?</DialogControl>
            <DialogControl aria-label="关闭"><svg width="9" height="9" viewBox="0 0 9 9" stroke="#333"><path d="M.5.500l8 8M8.500.500l-8 8" /></svg></DialogControl>
          </DialogHead>
          <DialogBody>
            <WidthField>
              <label htmlFor="column-width">列宽(<u>C</u>):</label>
              <WidthInput id="column-width" defaultValue="15" />
            </WidthField>
            <DialogActions>
              <DialogButton $primary>确定</DialogButton>
              <DialogButton>
                取消
                <Pointer $x={64} $y={5} width="60" height="71" viewBox="0 0 60 71" aria-hidden="true">
                  <path d="M0 0L12.500 5 10.500 7.500 60 71 6.500 11.500 3.500 13.500z" fill="#fb3d3a" />
                </Pointer>
              </DialogButton>
            </DialogActions>
          </DialogBody>
        </Dialog>
      </Workbook>

      <SheetBar>
        <SheetNav aria-label="上一个工作表"><Arrowhead dir="left" /></SheetNav>
        <SheetNav aria-label="下一个工作表"><Arrowhead dir="right" /></SheetNav>
        <SheetTab>Sheet1</SheetTab>
        <AddSheet aria-label="新工作表"><svg width="13" height="13" viewBox="0 0 13 13" fill="none" stroke="#777"><circle cx="6.500" cy="6.500" r="5.700" /><path d="M6.500 3.500v6M3.500 6.500h6" strokeWidth="1.300" /></svg></AddSheet>
        <SheetBarEnd>
          <Grip><Dots /></Grip>
          <HScroll>
            <ScrollButton aria-label="向左滚动"><Arrowhead dir="left" /></ScrollButton>
            <HTrack><HThumb /></HTrack>
            <ScrollButton aria-label="向右滚动"><Arrowhead dir="right" /></ScrollButton>
          </HScroll>
        </SheetBarEnd>
      </SheetBar>

      <StatusBar>
        <StatusSide>
          <StatusItem>就绪</StatusItem>
          <StatusItem><RecordIcon /></StatusItem>
          <StatusItem><AccessibilityIcon />辅助功能: 调查</StatusItem>
        </StatusSide>
        <StatusSide>
          <StatusItem>计数: 9</StatusItem>
          <ViewButton $active aria-label="普通"><ViewIcon kind="grid" /></ViewButton>
          <ViewButton aria-label="页面布局视图"><ViewIcon kind="page" /></ViewButton>
          <ViewButton aria-label="分页预览"><ViewIcon kind="break" /></ViewButton>
          <ZoomStep aria-label="缩小"><svg width="7" height="7"><path d="M0 3.500h7" stroke="#666" /></svg></ZoomStep>
          <ZoomRange type="range" aria-label="显示比例" min={0} max={200} defaultValue={75} />
          <ZoomStep aria-label="放大"><svg width="7" height="7"><path d="M0 3.500h7M3.500 0v7" stroke="#666" /></svg></ZoomStep>
          <ZoomValue>75%</ZoomValue>
        </StatusSide>
      </StatusBar>
    </Window>
  );
}
